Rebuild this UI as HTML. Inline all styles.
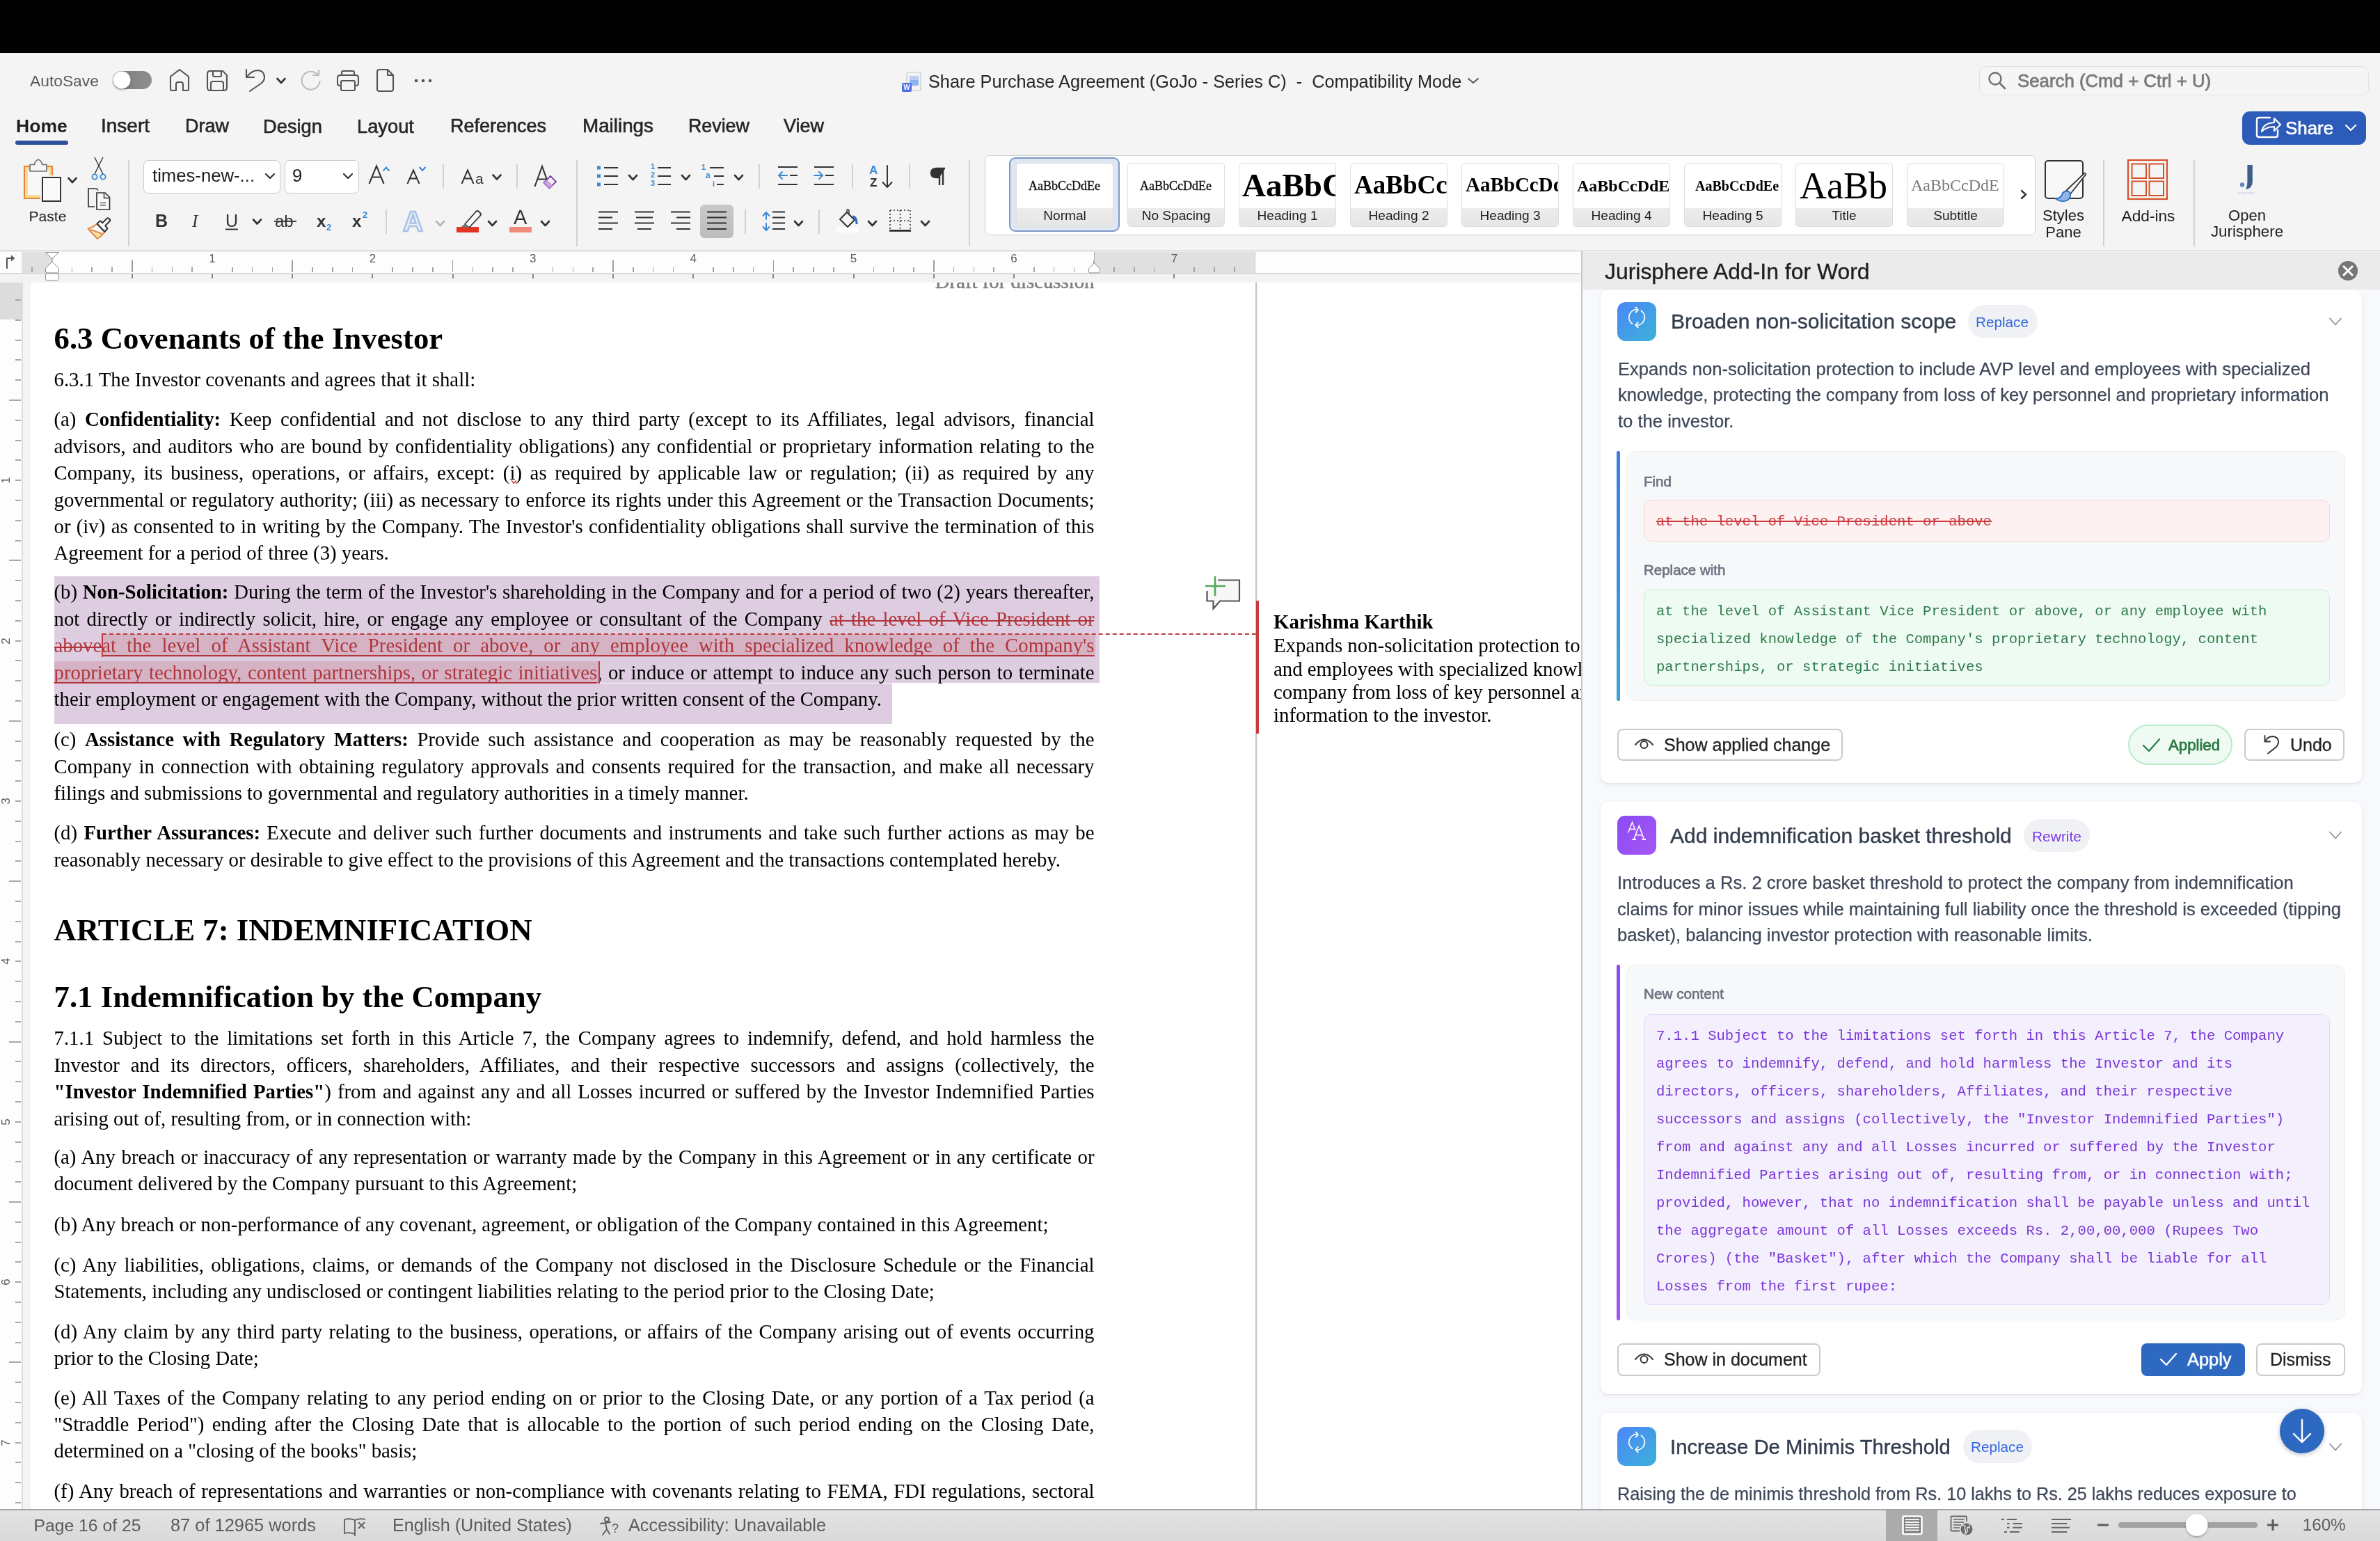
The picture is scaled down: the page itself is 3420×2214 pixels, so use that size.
<!DOCTYPE html>
<html><head><meta charset="utf-8">
<style>
*{box-sizing:border-box}
html,body{margin:0;padding:0}
body{width:3420px;height:2214px;position:relative;overflow:hidden;will-change:transform;background:#f4f4f4;font-family:"Liberation Sans",sans-serif;color:#262626}
.a{position:absolute}
.ln{position:absolute;white-space:nowrap;font-family:"Liberation Serif",serif;color:#000;text-align:justify;overflow:visible}
.ln b{font-weight:bold}
.del{color:#b0363c;background:linear-gradient(transparent 17.6px,#b0363c 17.6px,#b0363c 19.8px,transparent 19.8px)}
.ins{color:#b0363c;text-decoration:underline;text-decoration-thickness:2px;text-underline-offset:4px;text-decoration-skip-ink:none}
.t{position:absolute;white-space:nowrap;font-family:"Liberation Sans",sans-serif}
svg{position:absolute;overflow:visible}
</style></head><body>
<div class="a" style="left:0;top:0;width:3420px;height:76px;background:#000"></div>
<div class='a' style='left:2844px;top:95px;width:560px;height:42px;border:1.5px solid #e2e2e2;border-radius:9px;background:#f5f5f5'></div>
<div class='a' style='left:3222px;top:160px;width:178px;height:48px;background:#2d5bb9;border-radius:11px'></div>
<div class='a' style='left:22px;top:202px;width:76px;height:6px;background:#2e4f9a;border-radius:3px'></div>
<div class='a' style='left:184px;top:230px;width:2px;height:124px;background:#d2d2d2'></div>
<div class='a' style='left:206px;top:230px;width:197px;height:48px;background:#fff;border:1.3px solid #c9c9c9;border-radius:7px'></div>
<div class='a' style='left:409px;top:230px;width:107px;height:48px;background:#fff;border:1.3px solid #c9c9c9;border-radius:7px'></div>
<div class='a' style='left:636px;top:236px;width:2px;height:35px;background:#d2d2d2'></div>
<div class='a' style='left:742px;top:236px;width:2px;height:35px;background:#d2d2d2'></div>
<div class='a' style='left:828px;top:230px;width:2px;height:124px;background:#d2d2d2'></div>
<div class='a' style='left:1090px;top:236px;width:2px;height:35px;background:#d2d2d2'></div>
<div class='a' style='left:1224px;top:236px;width:2px;height:35px;background:#d2d2d2'></div>
<div class='a' style='left:1306px;top:236px;width:2px;height:35px;background:#d2d2d2'></div>
<div class='a' style='left:1392px;top:230px;width:2px;height:124px;background:#d2d2d2'></div>
<div class='a' style='left:554px;top:301px;width:2px;height:35px;background:#d2d2d2'></div>
<div class='a' style='left:656px;top:326px;width:32px;height:8px;background:#e53323'></div>
<div class='a' style='left:732px;top:326px;width:32px;height:8px;background:#f08b7c'></div>
<div class='a' style='left:1006px;top:294px;width:48px;height:48px;background:linear-gradient(#c9c9c9,#bcbcbc);border-radius:6px'></div>
<div class='a' style='left:1070px;top:301px;width:2px;height:35px;background:#d2d2d2'></div>
<div class='a' style='left:1176px;top:301px;width:2px;height:35px;background:#d2d2d2'></div>
<div class='a' style='left:1202px;top:326px;width:32px;height:8px;background:#fff'></div>
<div class='a' style='left:1415px;top:223px;width:1510px;height:115px;background:#fff;border:1.3px solid #cfcfcf;border-radius:7px'></div>
<div class='a' style='left:1450px;top:226px;width:159px;height:107px;background:#dfe6f2;border:2px solid #7d98c9;border-radius:9px'></div>
<div class='a' style='left:1460px;top:234px;width:140px;height:92px;background:linear-gradient(#fff 0,#fff 64px,#ececec 64px,#e6e6e6 100%);border:1px solid #dedede;border-radius:5px'></div>
<div class='a' style='left:1620px;top:234px;width:140px;height:92px;background:linear-gradient(#fff 0,#fff 64px,#ececec 64px,#e6e6e6 100%);border:1px solid #dedede;border-radius:5px'></div>
<div class='a' style='left:1780px;top:234px;width:140px;height:92px;background:linear-gradient(#fff 0,#fff 64px,#ececec 64px,#e6e6e6 100%);border:1px solid #dedede;border-radius:5px'></div>
<div class='a' style='left:1940px;top:234px;width:140px;height:92px;background:linear-gradient(#fff 0,#fff 64px,#ececec 64px,#e6e6e6 100%);border:1px solid #dedede;border-radius:5px'></div>
<div class='a' style='left:2100px;top:234px;width:140px;height:92px;background:linear-gradient(#fff 0,#fff 64px,#ececec 64px,#e6e6e6 100%);border:1px solid #dedede;border-radius:5px'></div>
<div class='a' style='left:2260px;top:234px;width:140px;height:92px;background:linear-gradient(#fff 0,#fff 64px,#ececec 64px,#e6e6e6 100%);border:1px solid #dedede;border-radius:5px'></div>
<div class='a' style='left:2420px;top:234px;width:140px;height:92px;background:linear-gradient(#fff 0,#fff 64px,#ececec 64px,#e6e6e6 100%);border:1px solid #dedede;border-radius:5px'></div>
<div class='a' style='left:2580px;top:234px;width:140px;height:92px;background:linear-gradient(#fff 0,#fff 64px,#ececec 64px,#e6e6e6 100%);border:1px solid #dedede;border-radius:5px'></div>
<div class='a' style='left:2740px;top:234px;width:140px;height:92px;background:linear-gradient(#fff 0,#fff 64px,#ececec 64px,#e6e6e6 100%);border:1px solid #dedede;border-radius:5px'></div>
<div class='a' style='left:3022px;top:230px;width:2px;height:124px;background:#d2d2d2'></div>
<div class='a' style='left:3152px;top:230px;width:2px;height:124px;background:#d2d2d2'></div>
<div class='a' style='left:0px;top:359.8px;width:3420px;height:2.4px;background:#c4c4c4'></div><svg width='3420' height='400' style='left:0;top:0'><defs><linearGradient id='tg' x1='0' y1='0' x2='1' y2='0'><stop offset='0' stop-color='#7c7c7c'/><stop offset='1' stop-color='#8e8e8e'/></linearGradient><filter id='sh' x='-50%' y='-50%' width='200%' height='200%'><feDropShadow dx='0' dy='1.5' stdDeviation='1.5' flood-color='#000' flood-opacity='0.35'/></filter><linearGradient id='ig1' x1='0' y1='0' x2='1' y2='1'><stop offset='0' stop-color='#4c86f7'/><stop offset='1' stop-color='#3bb2d9'/></linearGradient><linearGradient id='ig2' x1='0' y1='0' x2='1' y2='1'><stop offset='0' stop-color='#8a4cf3'/><stop offset='1' stop-color='#a656f5'/></linearGradient><linearGradient id='jb' x1='0' y1='0' x2='0' y2='1'><stop offset='0' stop-color='#d0d0d0'/><stop offset='1' stop-color='#bdbdbd'/></linearGradient></defs><rect x='162' y='102' width='56' height='26' rx='13' fill='url(#tg)'/><circle cx='175' cy='115' r='12.5' fill='#fff' filter='url(#sh)'/><path d='M245 110 L258 100 L271 110 L271 128 Q271 130 269 130 L263 130 L263 121 Q263 118 260 118 L256 118 Q253 118 253 121 L253 130 L247 130 Q245 130 245 128 Z' fill='none' stroke='#555' stroke-width='2.1' stroke-linejoin='round' stroke-linecap='round'/><path d='M302 102 L320 102 L326 108 L326 126 Q326 130 322 130 L302 130 Q298 130 298 126 L298 106 Q298 102 302 102 Z' fill='none' stroke='#555' stroke-width='2.1' stroke-linejoin='round' stroke-linecap='round'/><path d='M306 102 L306 108 Q306 110 308 110 L316 110 Q318 110 318 108 L318 102' fill='none' stroke='#555' stroke-width='2.1' stroke-linejoin='round' stroke-linecap='round'/><path d='M303 130 L303 120 Q303 117 306 117 L318 117 Q321 117 321 120 L321 130' fill='none' stroke='#555' stroke-width='2.1' stroke-linejoin='round' stroke-linecap='round'/><path d='M354 100 L354 111 L365 111' fill='none' stroke='#555' stroke-width='2.1' stroke-linejoin='round' stroke-linecap='round'/><path d='M355 110 Q362 101 371 101 Q380 102 380 111 Q380 116 375 120 L359 131' fill='none' stroke='#555' stroke-width='2.1' stroke-linejoin='round' stroke-linecap='round'/><path d='M398.5 113 L404 119 L409.5 113' fill='none' stroke='#333' stroke-width='2.6' stroke-linecap='round' stroke-linejoin='round'/><path d='M457 108 A13 13 0 1 0 459.5 117' fill='none' stroke='#bcbcbc' stroke-width='2.2' stroke-linecap='round'/><path d='M450 108 L458 108 L458 101' fill='none' stroke='#bcbcbc' stroke-width='2.2' stroke-linecap='round' stroke-linejoin='round'/><path d='M491 108 L491 104 Q491 102 493 102 L507 102 Q509 102 509 104 L509 108' fill='none' stroke='#555' stroke-width='2.1' stroke-linejoin='round' stroke-linecap='round'/><path d='M490 123 L488 123 Q485 123 485 120 L485 112 Q485 108 489 108 L511 108 Q515 108 515 112 L515 120 Q515 123 512 123 L510 123' fill='none' stroke='#555' stroke-width='2.1' stroke-linejoin='round' stroke-linecap='round'/><rect x='490' y='116' width='20' height='14' rx='2' fill='none' stroke='#555' stroke-width='2.1' stroke-linejoin='round' stroke-linecap='round'/><path d='M545 100 L557 100 L565 108 L565 128 Q565 131 562 131 L545 131 Q542 131 542 128 L542 103 Q542 100 545 100 Z' fill='none' stroke='#555' stroke-width='2.1' stroke-linejoin='round' stroke-linecap='round'/><path d='M557 100 L557 108 L565 108' fill='none' stroke='#555' stroke-width='2.1' stroke-linejoin='round' stroke-linecap='round'/><circle cx='598' cy='116' r='2.3' fill='#555'/><circle cx='608' cy='116' r='2.3' fill='#555'/><circle cx='618' cy='116' r='2.3' fill='#555'/><rect x='1303' y='104' width='20' height='26' rx='2.5' fill='#f4f4f6' stroke='#c8c8cc' stroke-width='1.2'/><rect x='1307' y='109' width='13' height='14' rx='1' fill='#8fb3ee'/><rect x='1307' y='109' width='13' height='6' fill='#b9cdf5'/><rect x='1296' y='119' width='14' height='13' rx='2' fill='#4f6fe0'/><path d='M2110 113 L2117 119 L2124 113' fill='none' stroke='#555' stroke-width='2' stroke-linecap='round' stroke-linejoin='round'/><circle cx='2867' cy='113' r='8.5' fill='none' stroke='#6f6f6f' stroke-width='2.4'/><path d='M2873.5 119.5 L2881 127' stroke='#6f6f6f' stroke-width='2.6' stroke-linecap='round'/><path d='M3262 169 L3246 169 Q3243 169 3243 172 L3243 194 Q3243 197 3246 197 L3270 197 Q3273 197 3273 194 L3273 187' fill='none' stroke='#fff' stroke-width='2.4' stroke-linecap='round'/><path d='M3250 189 Q3252 177 3268 176 L3268 170 L3277 179 L3268 188 L3268 182 Q3257 182 3250 189 Z' fill='none' stroke='#fff' stroke-width='2.2' stroke-linejoin='round'/><path d='M3371 180 L3378 187 L3385 180' fill='none' stroke='#fff' stroke-width='2.2' stroke-linecap='round' stroke-linejoin='round'/><rect x='35' y='239' width='40' height='46' fill='#f6dc95' stroke='#e6863a' stroke-width='2'/><rect x='40' y='244' width='30' height='36' fill='#f8f8f8'/><path d='M43 246 L43 236.5 L49.5 236.5 L49.5 235 Q52 229.5 55 229.5 Q58 229.5 60.5 235 L60.5 236.5 L67 236.5 L67 246 Z' fill='#f6f6f6' stroke='#707070' stroke-width='1.6'/><rect x='58' y='252' width='32' height='40' fill='#f4f4f4'/><rect x='61' y='255' width='26' height='34' fill='#fafafa' stroke='#333' stroke-width='2'/><path d='M98.5 256 L104 262 L109.5 256' fill='none' stroke='#333' stroke-width='2.6' stroke-linecap='round' stroke-linejoin='round'/><path d='M136 226 L148 250 M148 226 L136 250' stroke='#333' stroke-width='1.4'/><circle cx='136' cy='254' r='3.6' fill='none' stroke='#3b89d3' stroke-width='1.8'/><circle cx='148' cy='254' r='3.6' fill='none' stroke='#3b89d3' stroke-width='1.8'/><path d='M136 297 L127 297 L127 271 L138.5 271 L141 273.5' fill='none' stroke='#333' stroke-width='1.7'/><path d='M139 277 L151 277 L157.5 283.5 L157.5 301 L139 301 Z' fill='#f8f8f8' stroke='#333' stroke-width='1.7'/><path d='M149.5 277 L149.5 284.5 L157 284.5' fill='none' stroke='#333' stroke-width='1.5'/><path d='M144 291.5 L152 291.5 M144 295 L152 295' stroke='#666' stroke-width='1.3'/><path d='M139.5 321.5 Q133 327 126.5 328.5 L140 343 Q146 338.5 150.5 333.5 Z' fill='#f8f8f8' stroke='#e6863a' stroke-width='2' stroke-linejoin='round'/><path d='M133.5 333.5 L145 336.5 L140 341 Z' fill='#f6dc95'/><path d='M130 330 L146.5 335.8' stroke='#e6863a' stroke-width='2'/><path d='M139.5 321.5 L143 318 Q144 317 145 318 L147.2 320.3 L153.5 314 Q155 312.5 156.5 314 L157.5 315 Q159 316.5 157.5 318 L151.2 324.3 L153.5 326.6 Q155 328.1 153.5 329.6 L150.5 333 Z' fill='#f8f8f8' stroke='#333' stroke-width='2' stroke-linejoin='round'/><path d='M382 250 L388 256 L394 250' fill='none' stroke='#333' stroke-width='2.2' stroke-linecap='round' stroke-linejoin='round'/><path d='M494 250 L500 256 L506 250' fill='none' stroke='#333' stroke-width='2.2' stroke-linecap='round' stroke-linejoin='round'/><path d='M530.5 264 L541 238.5 L551.5 264 M534.5 254.5 L547.5 254.5' fill='none' stroke='#333' stroke-width='2.1'/><path d='M551 245 L555 240.5 L559 245' fill='none' stroke='#3b89d3' stroke-width='2' stroke-linecap='round'/><path d='M585.5 264 L594 244.5 L602.5 264 M588.8 256.5 L599.2 256.5' fill='none' stroke='#333' stroke-width='2'/><path d='M603 240.5 L607 245 L611 240.5' fill='none' stroke='#3b89d3' stroke-width='2' stroke-linecap='round'/><path d='M663.5 264 L672 244.5 L680.5 264 M666.8 256.5 L677.2 256.5' fill='none' stroke='#333' stroke-width='2'/><path d='M708.5 251.5 L714 257.5 L719.5 251.5' fill='none' stroke='#333' stroke-width='2.6' stroke-linecap='round' stroke-linejoin='round'/><path d='M768.5 268 L779 239 L789.5 268 M772.5 257.5 L785.5 257.5' fill='none' stroke='#333' stroke-width='2.1'/><path d='M781.5 262.5 L791 253 L799 261 L789.5 270.5 Z' fill='#f4f4f4' stroke='#7c36a8' stroke-width='1.8' stroke-linejoin='miter'/><path d='M781.5 262.5 L786 258 L794 266 L789.5 270.5 Z' fill='#c9a3e0'/><rect x='858' y='238.5' width='5' height='5' fill='#3b89d3'/><path d='M868 241 L888 241' stroke='#333' stroke-width='2'/><rect x='858' y='250.5' width='5' height='5' fill='#3b89d3'/><path d='M868 253 L888 253' stroke='#333' stroke-width='2'/><rect x='858' y='262.5' width='5' height='5' fill='#3b89d3'/><path d='M868 265 L888 265' stroke='#333' stroke-width='2'/><path d='M904 252 L909.5 258 L915 252' fill='none' stroke='#333' stroke-width='2.6' stroke-linecap='round' stroke-linejoin='round'/><path d='M945 241 L964 241' stroke='#333' stroke-width='2'/><path d='M945 253 L964 253' stroke='#333' stroke-width='2'/><path d='M945 265 L964 265' stroke='#333' stroke-width='2'/><path d='M980 252 L985.5 258 L991 252' fill='none' stroke='#333' stroke-width='2.6' stroke-linecap='round' stroke-linejoin='round'/><path d='M1020 241 L1040 241 M1026 253 L1040 253 M1030 265 L1040 265' stroke='#333' stroke-width='2'/><path d='M1056 252 L1061.5 258 L1067 252' fill='none' stroke='#333' stroke-width='2.6' stroke-linecap='round' stroke-linejoin='round'/><path d='M1118 240 L1146 240 M1135 252 L1146 252 M1118 265 L1146 265' stroke='#333' stroke-width='2'/><path d='M1131 252 L1119 252 M1124 247 L1119 252 L1124 257' fill='none' stroke='#3b89d3' stroke-width='2' stroke-linecap='round'/><path d='M1170 240 L1198 240 M1186 252 L1198 252 M1170 265 L1198 265' stroke='#333' stroke-width='2'/><path d='M1170 252 L1182 252 M1177 247 L1182 252 L1177 257' fill='none' stroke='#3b89d3' stroke-width='2' stroke-linecap='round'/><path d='M1275 238 L1275 269 M1268.5 262 L1275 269 L1281.5 262' fill='none' stroke='#333' stroke-width='2' stroke-linecap='round' stroke-linejoin='round'/><path d='M1350 242 L1350 266 M1355 242 L1355 266 M1358 242 L1346 242 Q1338 242 1338 248.5 Q1338 255 1346 255 L1350 255' fill='#333' stroke='#333' stroke-width='2.4'/><path d='M324 329.5 L342 329.5' stroke='#333' stroke-width='2'/><path d='M364 315.5 L369.5 321.5 L375 315.5' fill='none' stroke='#333' stroke-width='2.6' stroke-linecap='round' stroke-linejoin='round'/><path d='M394 318 L426 318' stroke='#333' stroke-width='1.8'/><path d='M627 318 L632.5 324 L638 318' fill='none' stroke='#b5b5b5' stroke-width='2.6' stroke-linecap='round' stroke-linejoin='round'/><path d='M668 322 L684 304 Q686 302 688 304 L690 306 Q692 308 690 310 L674 327 Z' fill='#f8f8f8' stroke='#333' stroke-width='1.8' stroke-linejoin='round'/><path d='M668 322 L663 326 L670 326 L674 327 Z' fill='#777' stroke='#777' stroke-width='1'/><path d='M702 318 L707.5 324 L713 318' fill='none' stroke='#333' stroke-width='2.6' stroke-linecap='round' stroke-linejoin='round'/><path d='M778 318 L783.5 324 L789 318' fill='none' stroke='#333' stroke-width='2.6' stroke-linecap='round' stroke-linejoin='round'/><path d='M860 304.5 L888 304.5' stroke='#333' stroke-width='2'/><path d='M860 312.5 L880 312.5' stroke='#333' stroke-width='2'/><path d='M860 320.5 L888 320.5' stroke='#333' stroke-width='2'/><path d='M860 329 L880 329' stroke='#333' stroke-width='2'/><path d='M912.0 304.5 L940.0 304.5' stroke='#333' stroke-width='2'/><path d='M914.0 312.5 L938.0 312.5' stroke='#333' stroke-width='2'/><path d='M912.0 320.5 L940.0 320.5' stroke='#333' stroke-width='2'/><path d='M916.0 329 L936.0 329' stroke='#333' stroke-width='2'/><path d='M964 304.5 L992 304.5' stroke='#333' stroke-width='2'/><path d='M972 312.5 L992 312.5' stroke='#333' stroke-width='2'/><path d='M964 320.5 L992 320.5' stroke='#333' stroke-width='2'/><path d='M972 329 L992 329' stroke='#333' stroke-width='2'/><path d='M1016 304.5 L1044 304.5' stroke='#333' stroke-width='2'/><path d='M1016 312.5 L1044 312.5' stroke='#333' stroke-width='2'/><path d='M1016 320.5 L1044 320.5' stroke='#333' stroke-width='2'/><path d='M1016 329 L1044 329' stroke='#333' stroke-width='2'/><path d='M1101 306 L1101 315 M1101 321 L1101 330 M1096.5 310 L1101 305 L1105.5 310 M1096.5 326 L1101 331 L1105.5 326' fill='none' stroke='#3b89d3' stroke-width='2' stroke-linecap='round' stroke-linejoin='round'/><path d='M1110 304.5 L1128 304.5' stroke='#333' stroke-width='2'/><path d='M1110 312.5 L1128 312.5' stroke='#333' stroke-width='2'/><path d='M1110 320.5 L1128 320.5' stroke='#333' stroke-width='2'/><path d='M1110 329 L1128 329' stroke='#333' stroke-width='2'/><path d='M1142 318 L1147.5 324 L1153 318' fill='none' stroke='#333' stroke-width='2.6' stroke-linecap='round' stroke-linejoin='round'/><path d='M1207 315 L1217 305 L1228 316 L1218 326 Z' fill='none' stroke='#333' stroke-width='2' stroke-linejoin='round'/><path d='M1217 305 L1217 302 Q1217 301 1218 301 Q1220 301 1220 303 L1220 309' fill='none' stroke='#333' stroke-width='1.5'/><path d='M1225 311 Q1231 311 1231 322' fill='none' stroke='#2e6ec0' stroke-width='3'/><path d='M1248 318 L1253.5 324 L1259 318' fill='none' stroke='#333' stroke-width='2.6' stroke-linecap='round' stroke-linejoin='round'/><path d='M1279 302 L1308 302 M1279 317 L1308 317 M1279 302 L1279 330 M1308 302 L1308 330 M1293.5 302 L1293.5 330' stroke='#333' stroke-width='1.6' stroke-dasharray='2 3'/><path d='M1278 331.5 L1309 331.5' stroke='#111' stroke-width='2.4'/><path d='M1324 318 L1329.5 324 L1335 318' fill='none' stroke='#333' stroke-width='2.6' stroke-linecap='round' stroke-linejoin='round'/><path d='M2905 274 L2911 279.5 L2905 285' fill='none' stroke='#333' stroke-width='2.4' stroke-linecap='round' stroke-linejoin='round'/><rect x='2939' y='231' width='54' height='54' rx='4' fill='#f8f8f8' stroke='#333' stroke-width='2'/><path d='M2968 275 L2994 250 Q2997 247 2997 251 L2974 280' fill='#f8f8f8' stroke='#333' stroke-width='1.8'/><path d='M2953 285 Q2962 286 2964 277 Q2968 273 2974 276 Q2977 282 2972 287 Q2963 292 2953 285 Z' fill='#8db5e8' stroke='#2e6ec0' stroke-width='1.8'/><rect x='3058' y='230' width='56' height='56' fill='none' stroke='#d6512b' stroke-width='2.2'/><rect x='3063.5' y='235.5' width='20.5' height='20.5' fill='none' stroke='#d6512b' stroke-width='2'/><rect x='3088.5' y='235.5' width='20.5' height='20.5' fill='none' stroke='#d6512b' stroke-width='2'/><rect x='3063.5' y='260.5' width='20.5' height='20.5' fill='none' stroke='#d6512b' stroke-width='2'/><rect x='3088.5' y='260.5' width='20.5' height='20.5' fill='none' stroke='#d6512b' stroke-width='2'/><path d='M3229.4 237 L3236.8 237 L3236.8 261 Q3236.8 271 3226.8 272 Q3229.4 268 3229.4 261 Z' fill='#3b5f89'/><circle cx='3222' cy='265.5' r='3.2' fill='#6489c4'/><path d='M3215.5 277.3 L3240 277.3' stroke='#b3c3de' stroke-width='1.6' stroke-dasharray='1.6 0.8'/></svg><div class='t' style='left:43px;top:104.70px;font-size:22.8px;line-height:22.8px;color:#5b5b5b;font-weight:normal;'>AutoSave</div>
<div class='t' style='left:1297px;top:119px;width:12px;font-size:10px;line-height:13px;color:#fff;font-weight:bold;text-align:center'>W</div>
<div class='t' style='left:1334px;top:104.58px;font-size:25.3px;line-height:25.3px;color:#262626;font-weight:normal;'>Share Purchase Agreement (GoJo - Series C) &nbsp;- &nbsp;Compatibility Mode</div>
<div class='t' style='left:2899px;top:104.16px;font-size:25.8px;line-height:25.8px;color:#7b7b7b;font-weight:normal;-webkit-text-stroke:0.8px #7b7b7b'>Search (Cmd + Ctrl + U)</div>
<div class='t' style='left:3284px;top:172.08px;font-size:25.9px;line-height:25.9px;color:#fff;font-weight:normal;-webkit-text-stroke:0.6px #fff'>Share</div>
<div class='t' style='left:23px;top:168.48px;font-size:26.6px;line-height:26.6px;color:#1e1e1e;font-weight:bold;'>Home</div>
<div class='t' style='left:145px;top:167.30px;font-size:28.0px;line-height:28.0px;color:#262626;font-weight:normal;-webkit-text-stroke:0.6px #262626'>Insert</div>
<div class='t' style='left:266px;top:168.14px;font-size:27.0px;line-height:27.0px;color:#262626;font-weight:normal;-webkit-text-stroke:0.6px #262626'>Draw</div>
<div class='t' style='left:378px;top:167.89px;font-size:27.3px;line-height:27.3px;color:#262626;font-weight:normal;-webkit-text-stroke:0.6px #262626'>Design</div>
<div class='t' style='left:513px;top:167.89px;font-size:27.3px;line-height:27.3px;color:#262626;font-weight:normal;-webkit-text-stroke:0.6px #262626'>Layout</div>
<div class='t' style='left:647px;top:168.14px;font-size:27.0px;line-height:27.0px;color:#262626;font-weight:normal;-webkit-text-stroke:0.6px #262626'>References</div>
<div class='t' style='left:837px;top:167.47px;font-size:27.8px;line-height:27.8px;color:#262626;font-weight:normal;-webkit-text-stroke:0.6px #262626'>Mailings</div>
<div class='t' style='left:989px;top:168.31px;font-size:26.8px;line-height:26.8px;color:#262626;font-weight:normal;-webkit-text-stroke:0.6px #262626'>Review</div>
<div class='t' style='left:1126px;top:168.14px;font-size:27.0px;line-height:27.0px;color:#262626;font-weight:normal;-webkit-text-stroke:0.6px #262626'>View</div>
<div class='t' style='left:41.5px;top:300.14px;font-size:21.1px;line-height:21.1px;color:#1e1e1e;font-weight:normal;'>Paste</div>
<div class='t' style='left:219px;top:240.24px;font-size:25.7px;line-height:25.7px;color:#1e1e1e;font-weight:normal;'>times-new-...</div>
<div class='t' style='left:420px;top:240.24px;font-size:25.7px;line-height:25.7px;color:#1e1e1e;font-weight:normal;'>9</div>
<div class='t' style='left:683px;top:246.22px;font-size:21px;line-height:21px;color:#333;font-weight:normal;'>a</div>
<div class='t' style='left:932px;top:233px;width:12px;font-size:11px;line-height:12px;color:#3b89d3;font-weight:bold;text-align:center'>1<br>2<br>3</div>
<div class='t' style='left:1008px;top:234px;font-size:11px;line-height:12px;color:#3b89d3;font-weight:bold'>1</div><div class='t' style='left:1014px;top:246px;font-size:12px;line-height:12px;color:#3b89d3;font-weight:bold'>a</div><div class='t' style='left:1024px;top:258px;font-size:11px;line-height:12px;color:#3b89d3;font-weight:bold'>i</div>
<div class='t' style='left:1249px;top:236px;font-size:17px;line-height:17px;color:#3b89d3;font-weight:bold'>A</div><div class='t' style='left:1250px;top:254px;font-size:17px;line-height:17px;color:#333;font-weight:bold'>Z</div>
<div class='t' style='left:223px;top:304.84px;font-size:25px;line-height:25px;color:#333;font-weight:bold;'>B</div>
<div class='t' style='left:276px;top:304.84px;font-size:25px;line-height:25px;color:#333;font-weight:normal;font-style:italic;font-family:Liberation Serif'>I</div>
<div class='t' style='left:324px;top:304.84px;font-size:25px;line-height:25px;color:#333;font-weight:normal;'>U</div>
<div class='t' style='left:395px;top:305.68px;font-size:24px;line-height:24px;color:#333;font-weight:normal;'>ab</div>
<div class='t' style='left:455px;top:305.68px;font-size:24px;line-height:24px;color:#333;font-weight:bold;'>x</div>
<div class='t' style='left:469px;top:320.00px;font-size:13px;line-height:13px;color:#3b89d3;font-weight:bold;'>2</div>
<div class='t' style='left:506px;top:305.68px;font-size:24px;line-height:24px;color:#333;font-weight:bold;'>x</div>
<div class='t' style='left:521px;top:302.00px;font-size:13px;line-height:13px;color:#3b89d3;font-weight:bold;'>2</div>
<div class='t' style='left:579px;top:298.14px;font-size:40px;line-height:40px;color:#e6eef9;font-weight:bold;-webkit-text-stroke:2.5px #a9c3e6'>A</div>
<div class='t' style='left:738px;top:298.45px;font-size:29px;line-height:29px;color:#333;font-weight:normal;'>A</div>
<div class='a' style='left:1461px;top:236px;width:138px;height:62px;overflow:hidden'><div class='t' style='left:17px;top:21.93px;font-family:Liberation Serif;font-weight:normal;font-size:18px;line-height:18px;color:#111;-webkit-text-stroke:0.35px #111'>AaBbCcDdEe</div></div>
<div class='t' style='left:1230px;width:600px;text-align:center;top:299.83px;font-size:19.1px;line-height:19.1px;color:#1e1e1e;font-weight:normal;'>Normal</div>
<div class='a' style='left:1621px;top:236px;width:138px;height:62px;overflow:hidden'><div class='t' style='left:17px;top:21.93px;font-family:Liberation Serif;font-weight:normal;font-size:18px;line-height:18px;color:#111;-webkit-text-stroke:0.35px #111'>AaBbCcDdEe</div></div>
<div class='t' style='left:1390px;width:600px;text-align:center;top:299.83px;font-size:19.1px;line-height:19.1px;color:#1e1e1e;font-weight:normal;'>No Spacing</div>
<div class='a' style='left:1781px;top:236px;width:138px;height:62px;overflow:hidden'><div class='t' style='left:4px;top:6.64px;font-family:Liberation Serif;font-weight:bold;font-size:47px;line-height:47px;color:#000;'>AaBbCc</div></div>
<div class='t' style='left:1550px;width:600px;text-align:center;top:299.83px;font-size:19.1px;line-height:19.1px;color:#1e1e1e;font-weight:normal;'>Heading 1</div>
<div class='a' style='left:1941px;top:236px;width:138px;height:62px;overflow:hidden'><div class='t' style='left:5px;top:11.01px;font-family:Liberation Serif;font-weight:bold;font-size:37px;line-height:37px;color:#000;'>AaBbCc</div></div>
<div class='t' style='left:1710px;width:600px;text-align:center;top:299.83px;font-size:19.1px;line-height:19.1px;color:#1e1e1e;font-weight:normal;'>Heading 2</div>
<div class='a' style='left:2101px;top:236px;width:138px;height:62px;overflow:hidden'><div class='t' style='left:5px;top:14.71px;font-family:Liberation Serif;font-weight:bold;font-size:29px;line-height:29px;color:#000;'>AaBbCcDd</div></div>
<div class='t' style='left:1870px;width:600px;text-align:center;top:299.83px;font-size:19.1px;line-height:19.1px;color:#1e1e1e;font-weight:normal;'>Heading 3</div>
<div class='a' style='left:2261px;top:236px;width:138px;height:62px;overflow:hidden'><div class='t' style='left:5px;top:18.90px;font-family:Liberation Serif;font-weight:bold;font-size:24px;line-height:24px;color:#000;'>AaBbCcDdE</div></div>
<div class='t' style='left:2030px;width:600px;text-align:center;top:299.83px;font-size:19.1px;line-height:19.1px;color:#1e1e1e;font-weight:normal;'>Heading 4</div>
<div class='a' style='left:2421px;top:236px;width:138px;height:62px;overflow:hidden'><div class='t' style='left:15px;top:21.25px;font-family:Liberation Serif;font-weight:bold;font-size:20px;line-height:20px;color:#000;'>AaBbCcDdEe</div></div>
<div class='t' style='left:2190px;width:600px;text-align:center;top:299.83px;font-size:19.1px;line-height:19.1px;color:#1e1e1e;font-weight:normal;'>Heading 5</div>
<div class='a' style='left:2581px;top:236px;width:138px;height:62px;overflow:hidden'><div class='t' style='left:5px;top:3.77px;font-family:Liberation Serif;font-weight:normal;font-size:54px;line-height:54px;color:#000;'>AaBb</div></div>
<div class='t' style='left:2350px;width:600px;text-align:center;top:299.83px;font-size:19.1px;line-height:19.1px;color:#1e1e1e;font-weight:normal;'>Title</div>
<div class='a' style='left:2741px;top:236px;width:138px;height:62px;overflow:hidden'><div class='t' style='left:5px;top:17.90px;font-family:Liberation Serif;font-weight:normal;font-size:24px;line-height:24px;color:#7a7a7a;'>AaBbCcDdE</div></div>
<div class='t' style='left:2510px;width:600px;text-align:center;top:299.83px;font-size:19.1px;line-height:19.1px;color:#1e1e1e;font-weight:normal;'>Subtitle</div>
<div class='t' style='left:2665px;width:600px;text-align:center;top:299.38px;font-size:22px;line-height:22px;color:#1e1e1e;font-weight:normal;'>Styles</div>
<div class='t' style='left:2665px;width:600px;text-align:center;top:322.68px;font-size:22px;line-height:22px;color:#1e1e1e;font-weight:normal;'>Pane</div>
<div class='t' style='left:2787px;width:600px;text-align:center;top:298.78px;font-size:22.7px;line-height:22.7px;color:#1e1e1e;font-weight:normal;'>Add-ins</div>
<div class='t' style='left:2929px;width:600px;text-align:center;top:299.38px;font-size:22px;line-height:22px;color:#1e1e1e;font-weight:normal;'>Open</div>
<div class='t' style='left:2929px;width:600px;text-align:center;top:322.42px;font-size:22.3px;line-height:22.3px;color:#1e1e1e;font-weight:normal;'>Jurisphere</div>
<div class="a" style="left:0;top:361px;width:2272px;height:1807px;background:#f4f4f4"></div>
<div class="a" style="left:0;top:406px;width:2272px;height:1762px;overflow:hidden">
 <div class="a" style="left:44px;top:0;width:1761px;height:1762px;background:#fff"></div>
 <div class="a" style="left:1807px;top:0;width:465px;height:1762px;background:#fff"></div>
 <div class="a" style="left:1804px;top:0;width:2px;height:1762px;background:#c4c4c4"></div>
 <div class="a" style="left:0;top:-406px;width:2272px;height:2214px">
<div class='ln' style='top:385px;left:1000px;width:1572.5px;left:0;text-align:right;text-align-last:right;color:#7f7f7f;font-size:28.8px;line-height:38.4px;-webkit-text-stroke:0.6px #7f7f7f'>Draft for discussion</div>
<div class='ln' style='top:460.58px;left:77.5px;width:1495px;height:50px;line-height:50px;font-size:44.8px;text-align-last:left;'><b>6.3 Covenants of the Investor</b></div>
<div class='ln' style='top:526.38px;left:77.5px;width:1495px;height:38.4px;line-height:38.4px;font-size:28.8px;text-align-last:left;'>6.3.1 The Investor covenants and agrees that it shall:</div>
<div class='ln' style='top:583.48px;left:77.5px;width:1495px;height:38.4px;line-height:38.4px;font-size:28.8px;text-align-last:justify;'>(a) <b>Confidentiality:</b> Keep confidential and not disclose to any third party (except to its Affiliates, legal advisors, financial</div>
<div class='ln' style='top:621.88px;left:77.5px;width:1495px;height:38.4px;line-height:38.4px;font-size:28.8px;text-align-last:justify;'>advisors, and auditors who are bound by confidentiality obligations) any confidential or proprietary information relating to the</div>
<div class='ln' style='top:660.28px;left:77.5px;width:1495px;height:38.4px;line-height:38.4px;font-size:28.8px;text-align-last:justify;'>Company, its business, operations, or affairs, except: (i) as required by applicable law or regulation; (ii) as required by any</div>
<div class='ln' style='top:698.68px;left:77.5px;width:1495px;height:38.4px;line-height:38.4px;font-size:28.8px;text-align-last:justify;'>governmental or regulatory authority; (iii) as necessary to enforce its rights under this Agreement or the Transaction Documents;</div>
<div class='ln' style='top:737.08px;left:77.5px;width:1495px;height:38.4px;line-height:38.4px;font-size:28.8px;text-align-last:justify;'>or (iv) as consented to in writing by the Company. The Investor's confidentiality obligations shall survive the termination of this</div>
<div class='ln' style='top:775.48px;left:77.5px;width:1495px;height:38.4px;line-height:38.4px;font-size:28.8px;text-align-last:left;'>Agreement for a period of three (3) years.</div>
<div style='position:absolute;left:78px;top:828.2px;width:1502px;height:153.3px;background:#decde1'></div>
<div style='position:absolute;left:78px;top:981.5px;width:1203.7px;height:58.2px;background:#decde1'></div>
<div style='position:absolute;left:147px;top:911px;width:1426.7px;height:32.5px;background:#d5b3c5'></div>
<div style='position:absolute;left:78px;top:950px;width:782.5px;height:31.5px;background:#d5b3c5'></div>
<div class='ln' style='top:831.48px;left:77.5px;width:1495px;height:38.4px;line-height:38.4px;font-size:28.8px;text-align-last:justify;'>(b) <b>Non-Solicitation:</b> During the term of the Investor's shareholding in the Company and for a period of two (2) years thereafter,</div>
<div class='ln' style='top:869.88px;left:77.5px;width:1495px;height:38.4px;line-height:38.4px;font-size:28.8px;text-align-last:justify;'>not directly or indirectly solicit, hire, or engage any employee or consultant of the Company <span class='del'>at the level of Vice President or</span></div>
<div class='ln' style='top:908.28px;left:77.5px;width:1495px;height:38.4px;line-height:38.4px;font-size:28.8px;text-align-last:justify;'><span class='del'>above</span><span class='ins'>at the level of Assistant Vice President or above, or any employee with specialized knowledge of the Company's</span></div>
<div class='ln' style='top:946.68px;left:77.5px;width:1495px;height:38.4px;line-height:38.4px;font-size:28.8px;text-align-last:justify;'><span class='ins'>proprietary technology, content partnerships, or strategic initiatives</span>, or induce or attempt to induce any such person to terminate</div>
<div class='ln' style='top:985.08px;left:77.5px;width:1495px;height:38.4px;line-height:38.4px;font-size:28.8px;text-align-last:left;'>their employment or engagement with the Company, without the prior written consent of the Company.</div>
<div style='position:absolute;left:147px;top:909.5px;width:1658px;height:0;border-top:2px dashed #c0393b'></div>
<div style='position:absolute;left:146px;top:910px;width:2px;height:34px;background:#c0393b'></div>
<div style='position:absolute;left:859.5px;top:950px;width:2px;height:32px;background:#c0393b'></div>
<div class='ln' style='top:1043.38px;left:77.5px;width:1495px;height:38.4px;line-height:38.4px;font-size:28.8px;text-align-last:justify;'>(c) <b>Assistance with Regulatory Matters:</b> Provide such assistance and cooperation as may be reasonably requested by the</div>
<div class='ln' style='top:1081.78px;left:77.5px;width:1495px;height:38.4px;line-height:38.4px;font-size:28.8px;text-align-last:justify;'>Company in connection with obtaining regulatory approvals and consents required for the transaction, and make all necessary</div>
<div class='ln' style='top:1120.18px;left:77.5px;width:1495px;height:38.4px;line-height:38.4px;font-size:28.8px;text-align-last:left;'>filings and submissions to governmental and regulatory authorities in a timely manner.</div>
<div class='ln' style='top:1177.28px;left:77.5px;width:1495px;height:38.4px;line-height:38.4px;font-size:28.8px;text-align-last:justify;'>(d) <b>Further Assurances:</b> Execute and deliver such further documents and instruments and take such further actions as may be</div>
<div class='ln' style='top:1215.68px;left:77.5px;width:1495px;height:38.4px;line-height:38.4px;font-size:28.8px;text-align-last:left;'>reasonably necessary or desirable to give effect to the provisions of this Agreement and the transactions contemplated hereby.</div>
<div class='ln' style='top:1310.98px;left:77.5px;width:1495px;height:50px;line-height:50px;font-size:44.8px;text-align-last:left;'><b>ARTICLE 7: INDEMNIFICATION</b></div>
<div class='ln' style='top:1407.18px;left:77.5px;width:1495px;height:50px;line-height:50px;font-size:44.8px;text-align-last:left;'><b>7.1 Indemnification by the Company</b></div>
<div class='ln' style='top:1472.38px;left:77.5px;width:1495px;height:38.4px;line-height:38.4px;font-size:28.8px;text-align-last:justify;'>7.1.1 Subject to the limitations set forth in this Article 7, the Company agrees to indemnify, defend, and hold harmless the</div>
<div class='ln' style='top:1510.78px;left:77.5px;width:1495px;height:38.4px;line-height:38.4px;font-size:28.8px;text-align-last:justify;'>Investor and its directors, officers, shareholders, Affiliates, and their respective successors and assigns (collectively, the</div>
<div class='ln' style='top:1549.18px;left:77.5px;width:1495px;height:38.4px;line-height:38.4px;font-size:28.8px;text-align-last:justify;'><b>"Investor Indemnified Parties"</b>) from and against any and all Losses incurred or suffered by the Investor Indemnified Parties</div>
<div class='ln' style='top:1587.58px;left:77.5px;width:1495px;height:38.4px;line-height:38.4px;font-size:28.8px;text-align-last:left;'>arising out of, resulting from, or in connection with:</div>
<div class='ln' style='top:1643.08px;left:77.5px;width:1495px;height:38.4px;line-height:38.4px;font-size:28.8px;text-align-last:justify;'>(a) Any breach or inaccuracy of any representation or warranty made by the Company in this Agreement or in any certificate or</div>
<div class='ln' style='top:1681.48px;left:77.5px;width:1495px;height:38.4px;line-height:38.4px;font-size:28.8px;text-align-last:left;'>document delivered by the Company pursuant to this Agreement;</div>
<div class='ln' style='top:1740.08px;left:77.5px;width:1495px;height:38.4px;line-height:38.4px;font-size:28.8px;text-align-last:left;'>(b) Any breach or non-performance of any covenant, agreement, or obligation of the Company contained in this Agreement;</div>
<div class='ln' style='top:1797.88px;left:77.5px;width:1495px;height:38.4px;line-height:38.4px;font-size:28.8px;text-align-last:justify;'>(c) Any liabilities, obligations, claims, or demands of the Company not disclosed in the Disclosure Schedule or the Financial</div>
<div class='ln' style='top:1836.28px;left:77.5px;width:1495px;height:38.4px;line-height:38.4px;font-size:28.8px;text-align-last:left;'>Statements, including any undisclosed or contingent liabilities relating to the period prior to the Closing Date;</div>
<div class='ln' style='top:1894.08px;left:77.5px;width:1495px;height:38.4px;line-height:38.4px;font-size:28.8px;text-align-last:justify;'>(d) Any claim by any third party relating to the business, operations, or affairs of the Company arising out of events occurring</div>
<div class='ln' style='top:1932.48px;left:77.5px;width:1495px;height:38.4px;line-height:38.4px;font-size:28.8px;text-align-last:left;'>prior to the Closing Date;</div>
<div class='ln' style='top:1988.58px;left:77.5px;width:1495px;height:38.4px;line-height:38.4px;font-size:28.8px;text-align-last:justify;'>(e) All Taxes of the Company relating to any period ending on or prior to the Closing Date, or any portion of a Tax period (a</div>
<div class='ln' style='top:2026.98px;left:77.5px;width:1495px;height:38.4px;line-height:38.4px;font-size:28.8px;text-align-last:justify;'>"Straddle Period") ending after the Closing Date that is allocable to the portion of such period ending on the Closing Date,</div>
<div class='ln' style='top:2065.38px;left:77.5px;width:1495px;height:38.4px;line-height:38.4px;font-size:28.8px;text-align-last:left;'>determined on a "closing of the books" basis;</div>
<div class='ln' style='top:2123.08px;left:77.5px;width:1495px;height:38.4px;line-height:38.4px;font-size:28.8px;text-align-last:justify;'>(f) Any breach of representations and warranties or non-compliance with covenants relating to FEMA, FDI regulations, sectoral</div>
<svg width='2272' height='800' style='left:0;top:0'><path d='M735 690.5 L738.5 694 L742 690.5' fill='none' stroke='#e0302a' stroke-width='1.6'/></svg>
<svg width='2272' height='1200' style='left:0;top:0'><path d='M1750 833.5 L1781 833.5 L1781 863.5 L1753 863.5 L1743.5 874.5 L1743.5 863.5 L1734.5 863.5 L1734.5 849' fill='#f7f7f7' stroke='#555' stroke-width='2.2' stroke-linejoin='miter'/><path d='M1732 842 L1761 842 M1746 828 L1746 856' stroke='#4fa95a' stroke-width='2.6'/></svg>
<div style='position:absolute;left:1805px;top:862.7px;width:4px;height:191.7px;background:#c8393e'></div>
<div class='ln' style='top:877.48px;left:1830px;width:600px;height:33.2px;line-height:33.2px;font-size:28.8px;text-align:left;text-align-last:left;font-weight:bold'>Karishma Karthik</div>
<div class='ln' style='top:911.28px;left:1830px;width:600px;height:33.2px;line-height:33.2px;font-size:28.8px;text-align:left;text-align-last:left;'>Expands non-solicitation protection to include AVP level</div>
<div class='ln' style='top:944.58px;left:1830px;width:600px;height:33.2px;line-height:33.2px;font-size:28.8px;text-align:left;text-align-last:left;'>and employees with specialized knowledge, protecting the</div>
<div class='ln' style='top:977.88px;left:1830px;width:600px;height:33.2px;line-height:33.2px;font-size:28.8px;text-align:left;text-align-last:left;'>company from loss of key personnel and proprietary</div>
<div class='ln' style='top:1011.18px;left:1830px;width:600px;height:33.2px;line-height:33.2px;font-size:28.8px;text-align:left;text-align-last:left;'>information to the investor.</div>
 </div>
</div>
<div class='a' style='left:0px;top:362px;width:2272px;height:31px;background:#fdfdfd'></div>
<div class='a' style='left:32px;top:362px;width:43px;height:31px;background:#e0e0e0'></div>
<div class='a' style='left:1572px;top:362px;width:231px;height:31px;background:#e0e0e0'></div>
<div class='a' style='left:0px;top:392px;width:2272px;height:1.5px;background:#dadada'></div>
<div class='a' style='left:0px;top:393.5px;width:2272px;height:12.5px;background:#f3f3f3'></div>
<div class='a' style='left:30.5px;top:362px;width:1.5px;height:44px;background:#e6e6e6'></div>
<div class='a' style='left:45.05px;top:384px;width:1.5px;height:7px;background:#a4a4a4'></div>
<div class='a' style='left:102.64999999999999px;top:384px;width:1.5px;height:7px;background:#a4a4a4'></div>
<div class='a' style='left:131.45px;top:384px;width:1.5px;height:7px;background:#a4a4a4'></div>
<div class='a' style='left:160.25px;top:384px;width:1.5px;height:7px;background:#a4a4a4'></div>
<div class='a' style='left:189.05px;top:374px;width:1.5px;height:17px;background:#9e9e9e'></div>
<div class='a' style='left:188.8px;top:394px;width:2px;height:6px;background:#8a8a8a'></div>
<div class='a' style='left:217.85px;top:384px;width:1.5px;height:7px;background:#a4a4a4'></div>
<div class='a' style='left:246.65px;top:384px;width:1.5px;height:7px;background:#a4a4a4'></div>
<div class='a' style='left:275.45px;top:384px;width:1.5px;height:7px;background:#a4a4a4'></div>
<div class='t' style='left:285.0px;width:40px;text-align:center;top:362px;font-size:17px;line-height:20px;color:#5a5a5a'>1</div>
<div class='a' style='left:304.0px;top:394px;width:2px;height:6px;background:#8a8a8a'></div>
<div class='a' style='left:333.04999999999995px;top:384px;width:1.5px;height:7px;background:#a4a4a4'></div>
<div class='a' style='left:361.85px;top:384px;width:1.5px;height:7px;background:#a4a4a4'></div>
<div class='a' style='left:390.65px;top:384px;width:1.5px;height:7px;background:#a4a4a4'></div>
<div class='a' style='left:419.45000000000005px;top:374px;width:1.5px;height:17px;background:#9e9e9e'></div>
<div class='a' style='left:419.20000000000005px;top:394px;width:2px;height:6px;background:#8a8a8a'></div>
<div class='a' style='left:448.25px;top:384px;width:1.5px;height:7px;background:#a4a4a4'></div>
<div class='a' style='left:477.04999999999995px;top:384px;width:1.5px;height:7px;background:#a4a4a4'></div>
<div class='a' style='left:505.85px;top:384px;width:1.5px;height:7px;background:#a4a4a4'></div>
<div class='t' style='left:515.4px;width:40px;text-align:center;top:362px;font-size:17px;line-height:20px;color:#5a5a5a'>2</div>
<div class='a' style='left:534.4px;top:394px;width:2px;height:6px;background:#8a8a8a'></div>
<div class='a' style='left:563.45px;top:384px;width:1.5px;height:7px;background:#a4a4a4'></div>
<div class='a' style='left:592.25px;top:384px;width:1.5px;height:7px;background:#a4a4a4'></div>
<div class='a' style='left:621.0500000000001px;top:384px;width:1.5px;height:7px;background:#a4a4a4'></div>
<div class='a' style='left:649.85px;top:374px;width:1.5px;height:17px;background:#9e9e9e'></div>
<div class='a' style='left:649.6px;top:394px;width:2px;height:6px;background:#8a8a8a'></div>
<div class='a' style='left:678.6500000000001px;top:384px;width:1.5px;height:7px;background:#a4a4a4'></div>
<div class='a' style='left:707.45px;top:384px;width:1.5px;height:7px;background:#a4a4a4'></div>
<div class='a' style='left:736.25px;top:384px;width:1.5px;height:7px;background:#a4a4a4'></div>
<div class='t' style='left:745.8000000000001px;width:40px;text-align:center;top:362px;font-size:17px;line-height:20px;color:#5a5a5a'>3</div>
<div class='a' style='left:764.8000000000001px;top:394px;width:2px;height:6px;background:#8a8a8a'></div>
<div class='a' style='left:793.85px;top:384px;width:1.5px;height:7px;background:#a4a4a4'></div>
<div class='a' style='left:822.6500000000001px;top:384px;width:1.5px;height:7px;background:#a4a4a4'></div>
<div class='a' style='left:851.45px;top:384px;width:1.5px;height:7px;background:#a4a4a4'></div>
<div class='a' style='left:880.25px;top:374px;width:1.5px;height:17px;background:#9e9e9e'></div>
<div class='a' style='left:880.0px;top:394px;width:2px;height:6px;background:#8a8a8a'></div>
<div class='a' style='left:909.0500000000001px;top:384px;width:1.5px;height:7px;background:#a4a4a4'></div>
<div class='a' style='left:937.85px;top:384px;width:1.5px;height:7px;background:#a4a4a4'></div>
<div class='a' style='left:966.6500000000001px;top:384px;width:1.5px;height:7px;background:#a4a4a4'></div>
<div class='t' style='left:976.2px;width:40px;text-align:center;top:362px;font-size:17px;line-height:20px;color:#5a5a5a'>4</div>
<div class='a' style='left:995.2px;top:394px;width:2px;height:6px;background:#8a8a8a'></div>
<div class='a' style='left:1024.25px;top:384px;width:1.5px;height:7px;background:#a4a4a4'></div>
<div class='a' style='left:1053.05px;top:384px;width:1.5px;height:7px;background:#a4a4a4'></div>
<div class='a' style='left:1081.85px;top:384px;width:1.5px;height:7px;background:#a4a4a4'></div>
<div class='a' style='left:1110.6499999999999px;top:374px;width:1.5px;height:17px;background:#9e9e9e'></div>
<div class='a' style='left:1110.3999999999999px;top:394px;width:2px;height:6px;background:#8a8a8a'></div>
<div class='a' style='left:1139.45px;top:384px;width:1.5px;height:7px;background:#a4a4a4'></div>
<div class='a' style='left:1168.25px;top:384px;width:1.5px;height:7px;background:#a4a4a4'></div>
<div class='a' style='left:1197.05px;top:384px;width:1.5px;height:7px;background:#a4a4a4'></div>
<div class='t' style='left:1206.6px;width:40px;text-align:center;top:362px;font-size:17px;line-height:20px;color:#5a5a5a'>5</div>
<div class='a' style='left:1225.6px;top:394px;width:2px;height:6px;background:#8a8a8a'></div>
<div class='a' style='left:1254.6499999999999px;top:384px;width:1.5px;height:7px;background:#a4a4a4'></div>
<div class='a' style='left:1283.45px;top:384px;width:1.5px;height:7px;background:#a4a4a4'></div>
<div class='a' style='left:1312.25px;top:384px;width:1.5px;height:7px;background:#a4a4a4'></div>
<div class='a' style='left:1341.05px;top:374px;width:1.5px;height:17px;background:#9e9e9e'></div>
<div class='a' style='left:1340.8px;top:394px;width:2px;height:6px;background:#8a8a8a'></div>
<div class='a' style='left:1369.85px;top:384px;width:1.5px;height:7px;background:#a4a4a4'></div>
<div class='a' style='left:1398.6499999999999px;top:384px;width:1.5px;height:7px;background:#a4a4a4'></div>
<div class='a' style='left:1427.45px;top:384px;width:1.5px;height:7px;background:#a4a4a4'></div>
<div class='t' style='left:1437.0px;width:40px;text-align:center;top:362px;font-size:17px;line-height:20px;color:#5a5a5a'>6</div>
<div class='a' style='left:1456.0px;top:394px;width:2px;height:6px;background:#8a8a8a'></div>
<div class='a' style='left:1485.05px;top:384px;width:1.5px;height:7px;background:#a4a4a4'></div>
<div class='a' style='left:1513.85px;top:384px;width:1.5px;height:7px;background:#a4a4a4'></div>
<div class='a' style='left:1542.6499999999999px;top:384px;width:1.5px;height:7px;background:#a4a4a4'></div>
<div class='a' style='left:1571.45px;top:374px;width:1.5px;height:17px;background:#9e9e9e'></div>
<div class='a' style='left:1600.25px;top:384px;width:1.5px;height:7px;background:#a4a4a4'></div>
<div class='a' style='left:1629.05px;top:384px;width:1.5px;height:7px;background:#a4a4a4'></div>
<div class='a' style='left:1657.85px;top:384px;width:1.5px;height:7px;background:#a4a4a4'></div>
<div class='t' style='left:1667.3999999999999px;width:40px;text-align:center;top:362px;font-size:17px;line-height:20px;color:#5a5a5a'>7</div>
<div class='a' style='left:1686.3999999999999px;top:394px;width:2px;height:6px;background:#8a8a8a'></div>
<div class='a' style='left:1715.45px;top:384px;width:1.5px;height:7px;background:#a4a4a4'></div>
<div class='a' style='left:1744.25px;top:384px;width:1.5px;height:7px;background:#a4a4a4'></div>
<div class='a' style='left:1773.05px;top:384px;width:1.5px;height:7px;background:#a4a4a4'></div>
<div class='a' style='left:1572px;top:362px;width:1px;height:16px;background:#b0b0b0'></div>
<div class='a' style='left:1802.5px;top:362px;width:1.5px;height:31px;background:#c8c8c8'></div>
<div class='a' style='left:0px;top:406px;width:30.5px;height:1762px;background:#fdfdfd'></div>
<div class='a' style='left:0px;top:406px;width:30.5px;height:53px;background:#dcdcdc'></div>
<div class='a' style='left:30.5px;top:406px;width:2px;height:1762px;background:#dddddd'></div>
<div class='a' style='left:22px;top:429.9px;width:8px;height:2px;background:#a8a8a8'></div>
<div class='a' style='left:22px;top:458.7px;width:8px;height:2px;background:#a8a8a8'></div>
<div class='a' style='left:22px;top:487.5px;width:8px;height:2px;background:#a8a8a8'></div>
<div class='a' style='left:22px;top:516.3px;width:8px;height:2px;background:#a8a8a8'></div>
<div class='a' style='left:22px;top:545.1px;width:8px;height:2px;background:#a8a8a8'></div>
<div class='a' style='left:13px;top:573.9px;width:17px;height:2px;background:#a8a8a8'></div>
<div class='a' style='left:22px;top:602.7px;width:8px;height:2px;background:#a8a8a8'></div>
<div class='a' style='left:22px;top:631.5px;width:8px;height:2px;background:#a8a8a8'></div>
<div class='a' style='left:22px;top:660.3px;width:8px;height:2px;background:#a8a8a8'></div>
<div class='t' style='left:-1px;width:20px;text-align:center;top:680.1px;font-size:17px;line-height:20px;color:#5a5a5a;transform:rotate(-90deg)'>1</div>
<div class='a' style='left:22px;top:689.1px;width:8px;height:2px;background:#a8a8a8'></div>
<div class='a' style='left:22px;top:717.9px;width:8px;height:2px;background:#a8a8a8'></div>
<div class='a' style='left:22px;top:746.7px;width:8px;height:2px;background:#a8a8a8'></div>
<div class='a' style='left:22px;top:775.5px;width:8px;height:2px;background:#a8a8a8'></div>
<div class='a' style='left:13px;top:804.3px;width:17px;height:2px;background:#a8a8a8'></div>
<div class='a' style='left:22px;top:833.1px;width:8px;height:2px;background:#a8a8a8'></div>
<div class='a' style='left:22px;top:861.9px;width:8px;height:2px;background:#a8a8a8'></div>
<div class='a' style='left:22px;top:890.7px;width:8px;height:2px;background:#a8a8a8'></div>
<div class='t' style='left:-1px;width:20px;text-align:center;top:910.5px;font-size:17px;line-height:20px;color:#5a5a5a;transform:rotate(-90deg)'>2</div>
<div class='a' style='left:22px;top:919.5px;width:8px;height:2px;background:#a8a8a8'></div>
<div class='a' style='left:22px;top:948.3px;width:8px;height:2px;background:#a8a8a8'></div>
<div class='a' style='left:22px;top:977.0999999999999px;width:8px;height:2px;background:#a8a8a8'></div>
<div class='a' style='left:22px;top:1005.9000000000001px;width:8px;height:2px;background:#a8a8a8'></div>
<div class='a' style='left:13px;top:1034.7px;width:17px;height:2px;background:#a8a8a8'></div>
<div class='a' style='left:22px;top:1063.5px;width:8px;height:2px;background:#a8a8a8'></div>
<div class='a' style='left:22px;top:1092.3px;width:8px;height:2px;background:#a8a8a8'></div>
<div class='a' style='left:22px;top:1121.1px;width:8px;height:2px;background:#a8a8a8'></div>
<div class='t' style='left:-1px;width:20px;text-align:center;top:1140.9px;font-size:17px;line-height:20px;color:#5a5a5a;transform:rotate(-90deg)'>3</div>
<div class='a' style='left:22px;top:1149.9px;width:8px;height:2px;background:#a8a8a8'></div>
<div class='a' style='left:22px;top:1178.7px;width:8px;height:2px;background:#a8a8a8'></div>
<div class='a' style='left:22px;top:1207.5px;width:8px;height:2px;background:#a8a8a8'></div>
<div class='a' style='left:22px;top:1236.3px;width:8px;height:2px;background:#a8a8a8'></div>
<div class='a' style='left:13px;top:1265.1px;width:17px;height:2px;background:#a8a8a8'></div>
<div class='a' style='left:22px;top:1293.9px;width:8px;height:2px;background:#a8a8a8'></div>
<div class='a' style='left:22px;top:1322.7px;width:8px;height:2px;background:#a8a8a8'></div>
<div class='a' style='left:22px;top:1351.5px;width:8px;height:2px;background:#a8a8a8'></div>
<div class='t' style='left:-1px;width:20px;text-align:center;top:1371.3px;font-size:17px;line-height:20px;color:#5a5a5a;transform:rotate(-90deg)'>4</div>
<div class='a' style='left:22px;top:1380.3px;width:8px;height:2px;background:#a8a8a8'></div>
<div class='a' style='left:22px;top:1409.1px;width:8px;height:2px;background:#a8a8a8'></div>
<div class='a' style='left:22px;top:1437.9px;width:8px;height:2px;background:#a8a8a8'></div>
<div class='a' style='left:22px;top:1466.7px;width:8px;height:2px;background:#a8a8a8'></div>
<div class='a' style='left:13px;top:1495.5px;width:17px;height:2px;background:#a8a8a8'></div>
<div class='a' style='left:22px;top:1524.3000000000002px;width:8px;height:2px;background:#a8a8a8'></div>
<div class='a' style='left:22px;top:1553.1000000000001px;width:8px;height:2px;background:#a8a8a8'></div>
<div class='a' style='left:22px;top:1581.9px;width:8px;height:2px;background:#a8a8a8'></div>
<div class='t' style='left:-1px;width:20px;text-align:center;top:1601.7px;font-size:17px;line-height:20px;color:#5a5a5a;transform:rotate(-90deg)'>5</div>
<div class='a' style='left:22px;top:1610.7px;width:8px;height:2px;background:#a8a8a8'></div>
<div class='a' style='left:22px;top:1639.5px;width:8px;height:2px;background:#a8a8a8'></div>
<div class='a' style='left:22px;top:1668.3000000000002px;width:8px;height:2px;background:#a8a8a8'></div>
<div class='a' style='left:22px;top:1697.1000000000001px;width:8px;height:2px;background:#a8a8a8'></div>
<div class='a' style='left:13px;top:1725.9px;width:17px;height:2px;background:#a8a8a8'></div>
<div class='a' style='left:22px;top:1754.7px;width:8px;height:2px;background:#a8a8a8'></div>
<div class='a' style='left:22px;top:1783.5px;width:8px;height:2px;background:#a8a8a8'></div>
<div class='a' style='left:22px;top:1812.3000000000002px;width:8px;height:2px;background:#a8a8a8'></div>
<div class='t' style='left:-1px;width:20px;text-align:center;top:1832.1000000000001px;font-size:17px;line-height:20px;color:#5a5a5a;transform:rotate(-90deg)'>6</div>
<div class='a' style='left:22px;top:1841.1000000000001px;width:8px;height:2px;background:#a8a8a8'></div>
<div class='a' style='left:22px;top:1869.9px;width:8px;height:2px;background:#a8a8a8'></div>
<div class='a' style='left:22px;top:1898.7px;width:8px;height:2px;background:#a8a8a8'></div>
<div class='a' style='left:22px;top:1927.5px;width:8px;height:2px;background:#a8a8a8'></div>
<div class='a' style='left:13px;top:1956.3000000000002px;width:17px;height:2px;background:#a8a8a8'></div>
<div class='a' style='left:22px;top:1985.1000000000001px;width:8px;height:2px;background:#a8a8a8'></div>
<div class='a' style='left:22px;top:2013.9px;width:8px;height:2px;background:#a8a8a8'></div>
<div class='a' style='left:22px;top:2042.7px;width:8px;height:2px;background:#a8a8a8'></div>
<div class='t' style='left:-1px;width:20px;text-align:center;top:2062.5px;font-size:17px;line-height:20px;color:#5a5a5a;transform:rotate(-90deg)'>7</div>
<div class='a' style='left:22px;top:2071.5px;width:8px;height:2px;background:#a8a8a8'></div>
<div class='a' style='left:22px;top:2100.3px;width:8px;height:2px;background:#a8a8a8'></div>
<div class='a' style='left:22px;top:2129.1px;width:8px;height:2px;background:#a8a8a8'></div>
<div class='a' style='left:22px;top:2157.9px;width:8px;height:2px;background:#a8a8a8'></div><svg width='2272' height='420' style='left:0;top:0'><path d='M10 386 L10 371 L17 371' fill='none' stroke='#5a5a5a' stroke-width='2.2'/><path d='M16 366.5 L21.5 371 L16 375.5 Z' fill='#5a5a5a'/><path d='M65.5 362.5 L84.5 362.5 L75 372 Z' fill='#fff' stroke='#8a8a8a' stroke-width='1'/><path d='M75 376 L84.5 385.5 L84.5 390 Q84.5 392 82.5 392 L67.5 392 Q65.5 392 65.5 390 L65.5 385.5 Z' fill='#fff' stroke='#8a8a8a' stroke-width='1'/><path d='M75 372 L75 376' stroke='#8a8a8a' stroke-width='1'/><rect x='65.5' y='393' width='19' height='10' rx='2.5' fill='#fff' stroke='#8a8a8a' stroke-width='1'/><path d='M1572.5 378 L1580.5 386 L1580.5 390 Q1580.5 392 1578.5 392 L1566.5 392 Q1564.5 392 1564.5 390 L1564.5 386 Z' fill='#fff' stroke='#8a8a8a' stroke-width='1'/></svg><div class="a" style="left:2272px;top:361px;width:1148px;height:1807px;background:#f8f9fc"></div>
<div class="a" style="left:2272px;top:361px;width:2px;height:1807px;background:#c8c8c8"></div>
<div class='a' style='left:2274px;top:362px;width:1146px;height:54px;background:#ebebeb'></div>
<div class='a' style='left:2300px;top:416px;width:1094px;height:709px;background:#fff;border-radius:12px;box-shadow:0 1px 2px rgba(30,40,60,0.06),0 2px 6px rgba(30,40,60,0.07)'></div>
<div class='a' style='left:2828px;top:438px;width:100px;height:48px;background:#f0f1f4;border-radius:24px'></div>
<div class='a' style='left:2337px;top:648px;width:1033px;height:359px;background:#f7f8fa;border:1.2px solid #eceef2;border-radius:13px'></div>
<div class='a' style='left:2323px;top:648px;width:5px;height:359px;background:linear-gradient(#3f7be3,#3aa5d6);border-radius:2px'></div>
<div class='a' style='left:2362px;top:718px;width:986px;height:60px;background:#fdf1f1;border:1.5px solid #f7d3d3;border-radius:11px'></div>
<div class='a' style='left:2362px;top:847px;width:986px;height:138px;background:#eefbf2;border:1.5px solid #c6edd2;border-radius:11px'></div>
<div class='a' style='left:2324px;top:1047px;width:324px;height:46px;background:#fff;border:2px solid #cbcbcb;border-radius:8px'></div>
<div class='a' style='left:3058px;top:1041px;width:150px;height:58px;background:#effaf2;border:2px solid #b9ecc8;border-radius:29px'></div>
<div class='a' style='left:3225px;top:1047px;width:144px;height:46px;background:#fff;border:2px solid #cbcbcb;border-radius:8px'></div>
<div class='a' style='left:2300px;top:1152px;width:1094px;height:851px;background:#fff;border-radius:12px;box-shadow:0 1px 2px rgba(30,40,60,0.06),0 2px 6px rgba(30,40,60,0.07)'></div>
<div class='a' style='left:2908px;top:1176.5px;width:95px;height:47.5px;background:#f0f1f4;border-radius:24px'></div>
<div class='a' style='left:2337px;top:1386px;width:1033px;height:511px;background:#f7f8fa;border:1.2px solid #eceef2;border-radius:13px'></div>
<div class='a' style='left:2323px;top:1386px;width:5px;height:511px;background:linear-gradient(#8b4cf0,#a155f3);border-radius:2px'></div>
<div class='a' style='left:2362px;top:1457px;width:986px;height:418px;background:#f4effd;border:1.5px solid #e3d8f7;border-radius:11px'></div>
<div class='a' style='left:2324px;top:1930px;width:292px;height:47px;background:#fff;border:2px solid #cbcbcb;border-radius:8px'></div>
<div class='a' style='left:3077px;top:1930px;width:149px;height:47px;background:#2d68c1;border-radius:8px'></div>
<div class='a' style='left:3242px;top:1930px;width:128px;height:47px;background:#fff;border:2px solid #cbcbcb;border-radius:8px'></div>
<div class='a' style='left:2300px;top:2030px;width:1094px;height:270px;background:#fff;border-radius:12px;box-shadow:0 1px 2px rgba(30,40,60,0.06),0 2px 6px rgba(30,40,60,0.07)'></div>
<div class='a' style='left:2821px;top:2054px;width:99px;height:48px;background:#f0f1f4;border-radius:24px'></div>
<div class='a' style='left:3276px;top:2024px;width:64px;height:64px;background:#2d68c1;border-radius:50%;box-shadow:0 2px 6px rgba(0,0,0,0.25)'></div>
<div class='a' style='left:0px;top:2167.5px;width:3420px;height:46.5px;background:linear-gradient(#e3e3e3,#d9d9d9);border-top:2px solid #a3a3a3'></div>
<div class='a' style='left:2710px;top:2170px;width:74px;height:44px;background:#ababab'></div><svg width='3420' height='2214' style='left:0;top:0'><circle cx='3374' cy='389' r='14' fill='#757575'/><path d='M3367 382 L3381 396 M3381 382 L3367 396' stroke='#fff' stroke-width='3'/><rect x='2324' y='434' width='56' height='56' rx='12' fill='url(#ig1)'/><g transform='translate(0,0)' fill='none' stroke='#fff' stroke-width='1.8' stroke-linecap='round' stroke-linejoin='round'><path d='M2352.5 444.6 A11.4 11.4 0 0 0 2345.5 465.2'/><path d='M2358.4 446.5 A11.4 11.4 0 0 1 2352 467.3'/><path d='M2350.4 441.4 L2354 445.1 L2350.4 448.8'/><path d='M2353.8 462.9 L2350.2 466.9 L2353.8 470.7'/></g><path d='M3348 457.5 L3356 466.5 L3364 457.5' fill='none' stroke='#8b93a4' stroke-width='1.8' stroke-linecap='round' stroke-linejoin='round'/><path d='M2350 1070 Q2362.5 1055 2375 1070' fill='none' stroke='#333' stroke-width='2' stroke-linecap='round'/><circle cx='2362.5' cy='1070' r='5' fill='none' stroke='#333' stroke-width='2'/><path d='M3080 1071 L3088 1079 L3103 1062' fill='none' stroke='#2b7a45' stroke-width='2.2' stroke-linecap='round' stroke-linejoin='round'/><path d='M3254.5 1057 L3254.5 1065.5 L3262 1065.5' fill='none' stroke='#333' stroke-width='1.9' stroke-linecap='round' stroke-linejoin='round'/><path d='M3255.5 1064.5 Q3259 1058 3265.5 1058 Q3274 1058.5 3274 1066 Q3274 1070 3270.5 1073.5 L3259 1082.5' fill='none' stroke='#333' stroke-width='1.9' stroke-linecap='round'/><rect x='2324' y='1172' width='56' height='56' rx='11' fill='url(#ig2)'/><g fill='none' stroke='#fff' stroke-width='1.5' stroke-linejoin='miter'><path d='M2339.6 1196.5 L2345.5 1181.5 L2350.2 1193.5'/><path d='M2341.5 1191.3 L2348.6 1191.3'/><path d='M2347.8 1205.8 L2355.3 1186.5 L2362.3 1205.8'/><path d='M2350.5 1199.8 L2360.2 1199.8'/><path d='M2345.5 1206 L2351 1206 M2359.5 1206 L2365 1206' stroke-width='1.8'/></g><path d='M3348 1195.5 L3356 1204.5 L3364 1195.5' fill='none' stroke='#8b93a4' stroke-width='1.8' stroke-linecap='round' stroke-linejoin='round'/><path d='M2350 1953 Q2362.5 1938 2375 1953' fill='none' stroke='#333' stroke-width='2' stroke-linecap='round'/><circle cx='2362.5' cy='1953' r='5' fill='none' stroke='#333' stroke-width='2'/><path d='M3105 1953 L3113 1961 L3127 1945' fill='none' stroke='#fff' stroke-width='2.4' stroke-linecap='round' stroke-linejoin='round'/><rect x='2324' y='2050' width='56' height='56' rx='12' fill='url(#ig1)'/><g transform='translate(0,1616)' fill='none' stroke='#fff' stroke-width='1.8' stroke-linecap='round' stroke-linejoin='round'><path d='M2352.5 444.6 A11.4 11.4 0 0 0 2345.5 465.2'/><path d='M2358.4 446.5 A11.4 11.4 0 0 1 2352 467.3'/><path d='M2350.4 441.4 L2354 445.1 L2350.4 448.8'/><path d='M2353.8 462.9 L2350.2 466.9 L2353.8 470.7'/></g><path d='M3348 2074.5 L3356 2083.5 L3364 2074.5' fill='none' stroke='#8b93a4' stroke-width='1.8' stroke-linecap='round' stroke-linejoin='round'/><path d='M3308 2040 L3308 2072 M3296 2060 L3308 2072 L3320 2060' fill='none' stroke='#fff' stroke-width='2.4' stroke-linecap='round' stroke-linejoin='round'/><path d='M495 2183 Q502 2181 510 2184 Q518 2181 525 2183' fill='none' stroke='#5c5c5c' stroke-width='1.8'/><path d='M495 2183 L495 2203 Q502 2201 510 2204 L510 2184 M510 2204 L510 2207' fill='none' stroke='#5c5c5c' stroke-width='1.8'/><path d='M515 2187 L524 2196 M524 2187 L515 2196' stroke='#5c5c5c' stroke-width='1.8'/><circle cx='872' cy='2183' r='3' fill='none' stroke='#5c5c5c' stroke-width='1.8'/><path d='M863 2189 L877 2187 M870 2188 L872 2197 L866 2205 M872 2197 L876 2204' fill='none' stroke='#5c5c5c' stroke-width='1.8' stroke-linecap='round'/><rect x='2734.5' y='2178.5' width='27' height='25.5' rx='2' fill='#7a7a7a' stroke='#fff' stroke-width='2.6'/><path d='M2737.5 2183.2 L2758 2183.2' stroke='#fff' stroke-width='1.9'/><path d='M2737.5 2187.1 L2758 2187.1' stroke='#fff' stroke-width='1.9'/><path d='M2737.5 2190.8 L2758 2190.8' stroke='#fff' stroke-width='1.9'/><path d='M2737.5 2194.6 L2758 2194.6' stroke='#fff' stroke-width='1.9'/><path d='M2737.5 2198.5 L2758 2198.5' stroke='#fff' stroke-width='1.9'/><path d='M2826 2186 L2826 2179.5 Q2826 2178.5 2825 2178.5 L2804.5 2178.5 Q2803.5 2178.5 2803.5 2179.5 L2803.5 2198.5 Q2803.5 2199.5 2804.5 2199.5 L2816 2199.5' fill='none' stroke='#666' stroke-width='1.8'/><path d='M2807 2183 L2823 2183 M2807 2187 L2822 2187 M2807 2191 L2818 2191 M2807 2195 L2816 2195' stroke='#666' stroke-width='1.7'/><circle cx='2826' cy='2197' r='9.2' fill='#6a6a6a' stroke='#e0e0e0' stroke-width='1.4'/><path d='M2820 2192 Q2823 2190.5 2824 2193 Q2822 2196 2824.5 2198.5 L2824 2204 Q2827 2202 2827.5 2198 Q2825.5 2196 2827 2194.5 L2830 2195 Q2829 2191 2830.5 2190.5' fill='none' stroke='#e8e8e8' stroke-width='1.3'/><path d='M2876 2183 L2880 2183 M2884 2183 L2898 2183 M2884 2189 L2887.6 2189 M2892.5 2189 L2906 2189 M2884 2194.8 L2887.6 2194.8 M2892.5 2194.8 L2906 2194.8 M2880 2201 L2884 2201 M2888 2201 L2901.7 2201' stroke='#666' stroke-width='2'/><path d='M2948 2183 L2976 2183 M2948 2189 L2970 2189 M2948 2194.8 L2974 2194.8 M2948 2201 L2970 2201' stroke='#666' stroke-width='2'/><path d='M3014 2191 L3030 2191' stroke='#5c5c5c' stroke-width='3'/><rect x='3044' y='2187' width='200' height='8' rx='4' fill='#a2a2a2'/><path d='M3258 2191 L3274 2191 M3266 2183 L3266 2199' stroke='#5c5c5c' stroke-width='3'/><circle cx='3156.7' cy='2191' r='15.8' fill='#fff' filter='url(#sh)'/></svg><div class='t' style='left:2306px;top:374.50px;font-size:31.9px;line-height:31.9px;color:#1f1f1f;font-weight:normal;-webkit-text-stroke:0.35px #1f1f1f'>Jurisphere Add-In for Word</div>
<div class='t' style='left:2401px;top:447.11px;font-size:30px;line-height:30px;color:#333d4e;font-weight:normal;-webkit-text-stroke:0.4px #333d4e'>Broaden non-solicitation scope</div>
<div class='t' style='left:2839px;top:453.48px;font-size:20.7px;line-height:20.7px;color:#3468de;font-weight:normal;'>Replace</div>
<div class='t' style='left:2325px;top:517.53px;font-size:25.6px;line-height:25.6px;color:#3d4758;font-weight:normal;-webkit-text-stroke:0.25px #3d4758'>Expands non-solicitation protection to include AVP level and employees with specialized</div>
<div class='t' style='left:2325px;top:555.23px;font-size:25.6px;line-height:25.6px;color:#3d4758;font-weight:normal;-webkit-text-stroke:0.25px #3d4758'>knowledge, protecting the company from loss of key personnel and proprietary information</div>
<div class='t' style='left:2325px;top:592.93px;font-size:25.6px;line-height:25.6px;color:#3d4758;font-weight:normal;-webkit-text-stroke:0.25px #3d4758'>to the investor.</div>
<div class='t' style='left:2362px;top:681.65px;font-size:20.5px;line-height:20.5px;color:#6b7280;font-weight:normal;-webkit-text-stroke:0.65px #6b7280'>Find</div>
<div class='t' style='left:2380px;top:739.71px;font-size:20.6px;line-height:20.6px;color:#cf3a3f;font-weight:normal;font-family:Liberation Mono,monospace;text-decoration:line-through;text-decoration-thickness:2px'>at the level of Vice President or above</div>
<div class='t' style='left:2362px;top:808.65px;font-size:20.5px;line-height:20.5px;color:#6b7280;font-weight:normal;-webkit-text-stroke:0.65px #6b7280'>Replace with</div>
<div class='t' style='left:2380px;top:869.21px;font-size:20.6px;line-height:20.6px;color:#2f7a4d;font-weight:normal;font-family:Liberation Mono,monospace;'>at the level of Assistant Vice President or above, or any employee with</div>
<div class='t' style='left:2380px;top:909.21px;font-size:20.6px;line-height:20.6px;color:#2f7a4d;font-weight:normal;font-family:Liberation Mono,monospace;'>specialized knowledge of the Company's proprietary technology, content</div>
<div class='t' style='left:2380px;top:949.21px;font-size:20.6px;line-height:20.6px;color:#2f7a4d;font-weight:normal;font-family:Liberation Mono,monospace;'>partnerships, or strategic initiatives</div>
<div class='t' style='left:2391px;top:1057.84px;font-size:25px;line-height:25px;color:#222;font-weight:normal;-webkit-text-stroke:0.3px #222'>Show applied change</div>
<div class='t' style='left:3116px;top:1059.71px;font-size:22.2px;line-height:22.2px;color:#2b7a45;font-weight:normal;-webkit-text-stroke:0.8px #2b7a45'>Applied</div>
<div class='t' style='left:3291px;top:1057.84px;font-size:25px;line-height:25px;color:#222;font-weight:normal;-webkit-text-stroke:0.3px #222'>Undo</div>
<div class='t' style='left:2400px;top:1185.57px;font-size:30.04px;line-height:30.04px;color:#333d4e;font-weight:normal;-webkit-text-stroke:0.4px #333d4e'>Add indemnification basket threshold</div>
<div class='t' style='left:2920px;top:1191.77px;font-size:20.95px;line-height:20.95px;color:#7a3be6;font-weight:normal;'>Rewrite</div>
<div class='t' style='left:2324px;top:1255.83px;font-size:25.6px;line-height:25.6px;color:#3d4758;font-weight:normal;-webkit-text-stroke:0.25px #3d4758'>Introduces a Rs. 2 crore basket threshold to protect the company from indemnification</div>
<div class='t' style='left:2324px;top:1293.58px;font-size:25.6px;line-height:25.6px;color:#3d4758;font-weight:normal;-webkit-text-stroke:0.25px #3d4758'>claims for minor issues while maintaining full liability once the threshold is exceeded (tipping</div>
<div class='t' style='left:2324px;top:1331.33px;font-size:25.6px;line-height:25.6px;color:#3d4758;font-weight:normal;-webkit-text-stroke:0.25px #3d4758'>basket), balancing investor protection with reasonable limits.</div>
<div class='t' style='left:2362px;top:1418.49px;font-size:20.69px;line-height:20.69px;color:#6b7280;font-weight:normal;-webkit-text-stroke:0.65px #6b7280'>New content</div>
<div class='t' style='left:2380px;top:1478.71px;font-size:20.6px;line-height:20.6px;color:#7a36d8;font-weight:normal;font-family:Liberation Mono,monospace;'>7.1.1 Subject to the limitations set forth in this Article 7, the Company</div>
<div class='t' style='left:2380px;top:1518.71px;font-size:20.6px;line-height:20.6px;color:#7a36d8;font-weight:normal;font-family:Liberation Mono,monospace;'>agrees to indemnify, defend, and hold harmless the Investor and its</div>
<div class='t' style='left:2380px;top:1558.71px;font-size:20.6px;line-height:20.6px;color:#7a36d8;font-weight:normal;font-family:Liberation Mono,monospace;'>directors, officers, shareholders, Affiliates, and their respective</div>
<div class='t' style='left:2380px;top:1598.71px;font-size:20.6px;line-height:20.6px;color:#7a36d8;font-weight:normal;font-family:Liberation Mono,monospace;'>successors and assigns (collectively, the "Investor Indemnified Parties")</div>
<div class='t' style='left:2380px;top:1638.71px;font-size:20.6px;line-height:20.6px;color:#7a36d8;font-weight:normal;font-family:Liberation Mono,monospace;'>from and against any and all Losses incurred or suffered by the Investor</div>
<div class='t' style='left:2380px;top:1678.71px;font-size:20.6px;line-height:20.6px;color:#7a36d8;font-weight:normal;font-family:Liberation Mono,monospace;'>Indemnified Parties arising out of, resulting from, or in connection with;</div>
<div class='t' style='left:2380px;top:1718.71px;font-size:20.6px;line-height:20.6px;color:#7a36d8;font-weight:normal;font-family:Liberation Mono,monospace;'>provided, however, that no indemnification shall be payable unless and until</div>
<div class='t' style='left:2380px;top:1758.71px;font-size:20.6px;line-height:20.6px;color:#7a36d8;font-weight:normal;font-family:Liberation Mono,monospace;'>the aggregate amount of all Losses exceeds Rs. 2,00,00,000 (Rupees Two</div>
<div class='t' style='left:2380px;top:1798.71px;font-size:20.6px;line-height:20.6px;color:#7a36d8;font-weight:normal;font-family:Liberation Mono,monospace;'>Crores) (the "Basket"), after which the Company shall be liable for all</div>
<div class='t' style='left:2380px;top:1838.71px;font-size:20.6px;line-height:20.6px;color:#7a36d8;font-weight:normal;font-family:Liberation Mono,monospace;'>Losses from the first rupee:</div>
<div class='t' style='left:2391px;top:1941.34px;font-size:25px;line-height:25px;color:#222;font-weight:normal;-webkit-text-stroke:0.3px #222'>Show in document</div>
<div class='t' style='left:3143px;top:1940.50px;font-size:25.4px;line-height:25.4px;color:#fff;font-weight:normal;-webkit-text-stroke:0.5px #fff'>Apply</div>
<div class='t' style='left:3262px;top:1941.34px;font-size:25px;line-height:25px;color:#222;font-weight:normal;-webkit-text-stroke:0.3px #222'>Dismiss</div>
<div class='t' style='left:2400px;top:2063.81px;font-size:29.28px;line-height:29.28px;color:#333d4e;font-weight:normal;-webkit-text-stroke:0.4px #333d4e'>Increase De Minimis Threshold</div>
<div class='t' style='left:2832px;top:2069.48px;font-size:20.7px;line-height:20.7px;color:#3468de;font-weight:normal;'>Replace</div>
<div class='t' style='left:2324px;top:2133.68px;font-size:25.19px;line-height:25.19px;color:#3d4758;font-weight:normal;-webkit-text-stroke:0.25px #3d4758'>Raising the de minimis threshold from Rs. 10 lakhs to Rs. 25 lakhs reduces exposure to</div>
<div class='t' style='left:48.5px;top:2179.57px;font-size:24.73px;line-height:24.73px;color:#5c5c5c;font-weight:normal;'>Page 16 of 25</div>
<div class='t' style='left:245px;top:2179.00px;font-size:25.4px;line-height:25.4px;color:#5c5c5c;font-weight:normal;'>87 of 12965 words</div>
<div class='t' style='left:564px;top:2179.14px;font-size:25.23px;line-height:25.23px;color:#5c5c5c;font-weight:normal;'>English (United States)</div>
<div class='t' style='left:879px;top:2187px;font-size:18px;line-height:18px;color:#5c5c5c'>?</div>
<div class='t' style='left:903px;top:2179.08px;font-size:25.3px;line-height:25.3px;color:#5c5c5c;font-weight:normal;'>Accessibility: Unavailable</div>
<div class='t' style='left:3308.7px;top:2179.23px;font-size:24.24px;line-height:24.24px;color:#5c5c5c;font-weight:normal;'>160%</div></body></html>
